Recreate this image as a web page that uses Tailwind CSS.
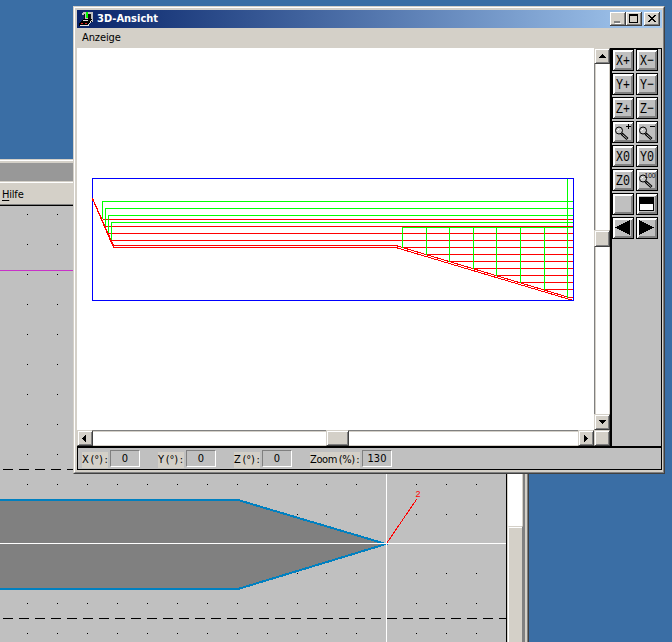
<!DOCTYPE html>
<html lang="de"><head><meta charset="utf-8"><title>3D-Ansicht</title>
<script src="https://cdn.jsdelivr.net/npm/@tailwindcss/browser@4"></script></head>
<body class="relative h-[642px] w-[672px] overflow-hidden bg-[#3a6ea5] text-[11px] text-black [font-family:'DejaVu_Sans_Condensed','DejaVu_Sans',sans-serif]">
<!-- editor window -->
<div class="absolute top-[159px] left-0 flex h-[483px] w-[529px] flex-col border-t border-r border-t-[#d4d0c8] border-r-[#404040] bg-[#d4d0c8]">
 <div class="flex h-full flex-col border-t border-r border-t-white border-r-[#808080] pt-[2px]">
  <div class="h-[18px] shrink-0 bg-[#989898]"></div>
  <div class="mt-px h-px shrink-0 bg-white"></div>
  <div class="flex h-[21px] shrink-0 items-center pt-px pl-[2px] leading-none"><span class="tracking-[-0.2px]"><u class="underline-offset-2">H</u>ilfe</span></div>
  <div class="h-[2px] shrink-0 border-b border-b-black bg-[#808080]"></div>
  <div class="flex h-[436px] shrink-0 pr-[2px]">
   <svg class="h-[436px] w-[506px] shrink-0" viewBox="0 206 506 436" shape-rendering="crispEdges">
    <rect y="206" width="506" height="436" fill="#c0c0c0"/>
    <g id="dots"></g>
    <path d="M0 270.5H80" stroke="#c832c8"/>
    <path d="M3 469.5H506M3 618.5H506" stroke="#000" stroke-dasharray="10 6"/>
    <path d="M-5 500H238L386 544L238 589H-5Z" fill="#808080" stroke="#0080c0" stroke-width="2"/>
    <path d="M0 543.5H506M386.5 206V642" stroke="#fff"/>
    <path d="M386.5 543.5L416.500 499.500" stroke="#f00"/>
    <text x="415.500" y="497" font-size="9" fill="#f00" font-family="Liberation Sans">2</text>
   </svg>
   <div class="w-px shrink-0 bg-black"></div>
   <div class="flex w-[18px] shrink-0 flex-col border-r-2 border-l border-r-[#808080] border-l-[#d4d0c8] bg-white pt-[320px] shadow-[inset_-1px_0_#d4d0c8]">
    <div class="grow border-t border-r border-l border-t-[#d4d0c8] border-r-[#808080] border-l-white bg-[#d4d0c8] shadow-[inset_0_1px_#fff]"></div>
   </div>
  </div>
 </div>
</div>
<!-- 3D view window -->
<div class="absolute top-[6px] left-[73px] h-[468px] w-[592px] border border-t-[#d4d0c8] border-r-[#404040] border-b-[#404040] border-l-[#d4d0c8] bg-[#d4d0c8]">
 <div class="flex h-full flex-col border border-t-white border-r-[#808080] border-b-[#808080] border-l-white pt-[2px] pr-px pl-[2px]">
  <div class="flex h-[18px] w-[585px] shrink-0 items-center bg-linear-to-r from-[#0a246a] to-[#a6caf0] pr-[2px]">
   <svg class="ml-[2px] size-[16px]" viewBox="0 0 16 16" shape-rendering="crispEdges"><path d="M4 1H14V11H10V9H5V4H3V2Z" fill="#c0c0c0"/><path d="M5 3H6V8H5ZM9 3H12V8H9Z" fill="#111"/><path d="M7 1H9V7H7Z" fill="#0f0"/><path d="M4 8H13V10L9 15H0V12Z" fill="#000"/><path d="M1 14.500H9L13 9M4 9.500H9" stroke="#ddd" fill="none"/><path d="M2 12.500H4M6 12.500H8" stroke="#d22"/></svg>
   <b class="mt-px ml-[2px] grow text-[11px] text-white">3D-Ansicht</b>
   <svg class="h-[14px] w-[50px]" viewBox="0 0 50 14" shape-rendering="crispEdges">
    <g id="wb"><path d="M0 0H16V14H0Z" fill="#404040"/><path d="M0 0H15V13H0Z" fill="#fff"/><path d="M1 1H15V13H1Z" fill="#808080"/><path d="M1 1H14V12H1Z" fill="#d4d0c8"/></g>
    <use href="#wb" x="16"/><use href="#wb" x="34"/>
    <path d="M4 10H10V11H4Z" fill="#808080"/><path d="M4 9H10V10H4Z" fill="#808080"/><path d="M5 11H11V12H5Z" fill="#fff"/>
    <path d="M19.500 3V10.500H27.500V2" fill="none" stroke="#000"/><path d="M19 2H28V4H19Z"/>
    <path d="M38 3h2v1h1v1h2v-1h1v-1h2v1h-1v1h-1v1h-1v1h1v1h1v1h1v1h-2v-1h-1v-1h-2v1h-1v1h-2v-1h1v-1h1v-1h1v-1h-1v-1h-1v-1h-1z"/>
   </svg>
  </div>
  <div class="flex h-[20px] shrink-0 items-center pt-px pl-[5px]"><span class="tracking-[-0.1px]">Anzeige</span></div>
  <div class="flex h-[398px] shrink-0">
   <div class="w-[533px]">
    <div class="flex h-[382px]">
     <svg class="h-[382px] w-[517px] bg-white" viewBox="77 48 517 382" fill="none" shape-rendering="crispEdges">
      <path stroke="#f00" d="M103 219.500H573M106 226.500H573M109 233.500H573M112 240.500H573M113 245.500H398M113 247.500H398M403 247.500H573M427 254.500H573M450 261.500H573M474 268.500H573M497 275.500H573M521 282.500H573M545 289.500H573M92.500 198.500L113.500 245.500M93 198.500V200L113.500 247.500M397.500 246L567.500 297H573M397.500 248L571.500 300"/>
      <path stroke="#0f0" d="M102.500 219V201.500H573M105.500 226V208.500H573M108.500 233V215.500H573M111.500 240V222.500H573M402 227.500H573M402.500 227V248M426.500 227V255M449.500 227V262M473.500 227V269M496.500 227V276M520.500 227V283M544.500 227V290M567.500 179V298"/>
      <path stroke="#f00" d="M402 226.500H573"/>
      <path stroke="#00f" d="M92.500 178.500H573.500V300.500H92.500Z"/>
      <path stroke="#f00" d="M92.500 198V201"/>
     </svg>
     <div class="flex w-[16px] flex-col border-l border-l-[#808080] bg-white shadow-[inset_1px_0_#d4d0c8,inset_-1px_0_#d4d0c8]">
      <div class="-ml-px grid h-[16px] w-[16px] place-items-center border border-t-[#d4d0c8] border-r-[#404040] border-b-[#404040] border-l-[#d4d0c8] bg-[#d4d0c8] shadow-[inset_1px_1px_#fff,inset_-1px_-1px_#808080]"><svg class="h-[4px] w-[7px]" viewBox="0 0 7 4" shape-rendering="crispEdges"><path d="M3 0h1v1h1v1h1v1h1v1H0V3h1V2h1V1h1z"/></svg></div>
      <div class="mt-[166px] mb-auto -ml-px h-[17px] w-[16px] border border-[#d4d0c8] border-r-[#404040] border-b-[#404040] bg-[#d4d0c8] shadow-[inset_1px_1px_#fff,inset_-1px_-1px_#808080]"></div>
      <div class="-ml-px grid h-[16px] w-[16px] place-items-center border border-t-[#d4d0c8] border-r-[#404040] border-b-[#404040] border-l-[#d4d0c8] bg-[#d4d0c8] shadow-[inset_1px_1px_#fff,inset_-1px_-1px_#808080]"><svg class="h-[4px] w-[7px] rotate-180" viewBox="0 0 7 4" shape-rendering="crispEdges"><path d="M3 0h1v1h1v1h1v1h1v1H0V3h1V2h1V1h1z"/></svg></div>
     </div>
    </div>
    <div class="flex h-[16px] bg-white shadow-[inset_0_1px_#808080,inset_0_2px_#d4d0c8,inset_0_-1px_#d4d0c8]">
     <div class="grid h-[16px] w-[16px] place-items-center border border-t-[#d4d0c8] border-r-[#404040] border-b-[#404040] border-l-[#d4d0c8] bg-[#d4d0c8] shadow-[inset_1px_1px_#fff,inset_-1px_-1px_#808080]"><svg class="mr-[2px] h-[7px] w-[4px]" viewBox="0 0 4 7" shape-rendering="crispEdges"><path d="M0 3h1V2h1V1h1V0h1v7H3V6H2V5H1V4H0z"/></svg></div>
     <div class="ml-[233px] h-[16px] w-[23px] border border-[#d4d0c8] border-r-[#404040] border-b-[#404040] bg-[#d4d0c8] shadow-[inset_1px_1px_#fff,inset_-1px_-1px_#808080]"></div>
     <div class="ml-auto grid h-[16px] w-[16px] place-items-center border border-t-[#d4d0c8] border-r-[#404040] border-b-[#404040] border-l-[#d4d0c8] bg-[#d4d0c8] shadow-[inset_1px_1px_#fff,inset_-1px_-1px_#808080]"><svg class="h-[7px] w-[4px] rotate-180" viewBox="0 0 4 7" shape-rendering="crispEdges"><path d="M0 3h1V2h1V1h1V0h1v7H3V6H2V5H1V4H0z"/></svg></div>
     <div class="h-[16px] w-[16px] border border-[#d4d0c8] border-r-[#404040] border-b-[#404040] bg-[#d4d0c8] shadow-[inset_1px_1px_#fff,inset_-1px_-1px_#808080]"></div>
    </div>
   </div>
   <div id="tools" class="grid w-[52px] shrink-0 auto-rows-[22px] grid-cols-[22px_22px] content-start gap-[2px] border-t border-r border-l-2 border-black bg-[#c0c0c0]"></div>
  </div>
  <div class="flex h-[24px] w-[585px] shrink-0 border border-t-2 border-black bg-[#c0c0c0] pt-[2px] pl-[4px] leading-[16px]">
   <div class="flex w-[76px]"><span class="mt-[2px] h-[16px] w-[26px] bg-[#d4d0c8] tracking-[-0.1px] whitespace-nowrap [word-spacing:-1.3px]">X (°) :</span><span class="ml-[2px] h-[17px] w-[30px] border border-t-[#808080] border-r-white border-b-white border-l-[#808080] text-center">0</span></div>
   <div class="flex w-[76px]"><span class="mt-[2px] h-[16px] w-[26px] bg-[#d4d0c8] tracking-[-0.1px] whitespace-nowrap [word-spacing:-1.3px]">Y (°) :</span><span class="ml-[2px] h-[17px] w-[30px] border border-t-[#808080] border-r-white border-b-white border-l-[#808080] text-center">0</span></div>
   <div class="flex w-[76px]"><span class="mt-[2px] h-[16px] w-[26px] bg-[#d4d0c8] tracking-[-0.1px] whitespace-nowrap [word-spacing:-1.3px]">Z (°) :</span><span class="ml-[2px] h-[17px] w-[30px] border border-t-[#808080] border-r-white border-b-white border-l-[#808080] text-center">0</span></div>
   <div class="flex"><span class="mt-[2px] h-[16px] w-[50px] bg-[#d4d0c8] tracking-[-0.4px] whitespace-nowrap [word-spacing:-1px]">Zoom (%) :</span><span class="ml-[2px] h-[17px] w-[30px] border border-t-[#808080] border-r-white border-b-white border-l-[#808080] text-center">130</span></div>
  </div>
 </div>
</div>
<script>
let dots='';
for(const y of [214,244,274,304,334,364,394,424,454,484,514,573,603,633])
 for(const x of [27,57,87,117,147,177,207,237,267,297,326,356,416,446,476]) dots+=`<rect x="${x}" y="${y}" width="1" height="1"/>`;
document.getElementById('dots').innerHTML=dots;
const lens='<g shape-rendering="auto"><path d="M9.500 12.500L15.500 18" stroke="#000" stroke-width="3"/><path d="M10.500 13.500L15 17.500" stroke="#c0c0c0"/><circle cx="7" cy="9.500" r="3.500" fill="#c8c8c8" stroke="#000"/><path d="M5.500 9.500L7 8" stroke="#fff"/></g>';
const icons=['X+','X-','Y+','Y-','Z+','Z-',lens+'<path d="M16 3H17V5H19V6H17V8H16V6H14V5H16Z"/>',lens+'<path d="M14 5H19V6H14Z"/>','X0','Y0','Z0',lens+'<text x="8.500" y="8.500" font-size="8" textLength="11" lengthAdjust="spacingAndGlyphs" font-family="Liberation Sans">100</text>','','<path d="M3 4H18V18H3Z"/><path d="M4 11H17V17H4Z" fill="#fff"/>','<path d="M18 3V18L3 10.500Z"/>','<path d="M3 3V18L18 10.500Z"/>'];
document.getElementById('tools').innerHTML=icons.map(i=>`<svg class="size-[22px]" viewBox="0 0 22 22" shape-rendering="crispEdges"><path d="M0 0H22V22H0Z"/><path d="M1 1H21V21H1Z" fill="#808080"/><path d="M1 1H21L19 3V19H3L1 21Z" fill="#fff"/><path d="M3 3H19V19H3Z" fill="#c0c0c0"/>${i.length==2?`<text x="4" y="15.500" font-size="15" textLength="14" lengthAdjust="spacingAndGlyphs" font-family="Liberation Mono">${i.replace('-','−')}</text>`:i}</svg>`).join('');
</script>
</body></html>
